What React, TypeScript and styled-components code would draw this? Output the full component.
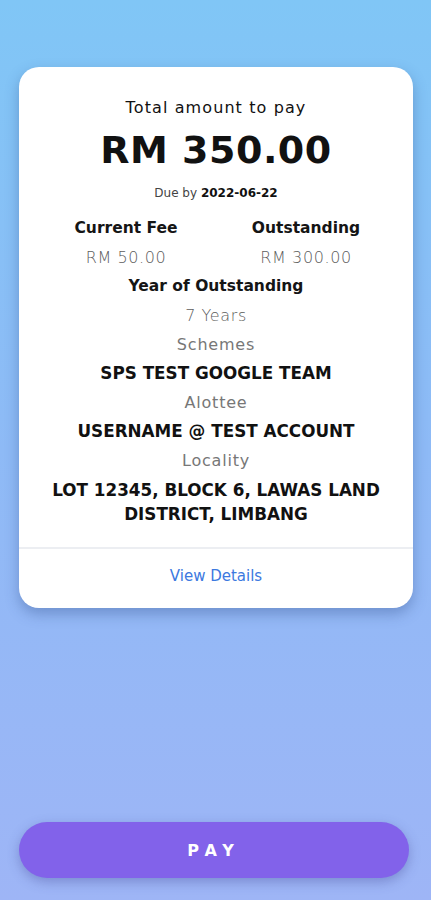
import React from 'react';
import styled, { createGlobalStyle } from 'styled-components';

const GlobalStyle = createGlobalStyle`
  * {
    box-sizing: border-box;
  }
  html, body {
    margin: 0;
    padding: 0;
  }
  body {
    font-family: 'DejaVu Sans', 'Open Sans', sans-serif;
    color: #111;
  }
`;

const Screen = styled.div`
  display: flex;
  flex-direction: column;
  justify-content: space-between;
  width: 100%;
  height: 900px;
  padding: 67px 19px 22px;
  background: linear-gradient(180deg, #80c6f6 0%, #8ebaf6 50%, #9eb5f6 100%);
`;

const Card = styled.div`
  display: flex;
  flex-direction: column;
  background-color: white;
  border-radius: 20px;
  box-shadow: 0 6px 14px rgba(40, 70, 130, 0.35);
  width: 394px;
`;

const Body = styled.div`
  display: flex;
  flex-direction: column;
  align-items: center;
  padding: 30px 12px 21px;
  text-align: center;
`;

const Label = styled.div`
  font-size: 16px;
  line-height: 22px;
  letter-spacing: 1.1px;
  color: #111;
`;

const Amount = styled.div`
  font-size: 38px;
  line-height: 46px;
  font-weight: 700;
  margin-top: 8px;
  letter-spacing: 0.5px;
  color: #111;
`;

const Due = styled.div`
  font-size: 12px;
  line-height: 16px;
  color: #444;
  margin-top: 12px;
  margin-bottom: 13px;
  b {
    color: #111;
    font-weight: 700;
  }
`;

const Columns = styled.div`
  display: grid;
  grid-template-columns: 1fr 1fr;
  width: 100%;
  padding: 0 5px;
`;

const Column = styled.div`
  display: flex;
  flex-direction: column;
  align-items: center;
`;

const FieldTitle = styled.div`
  font-size: 15.5px;
  font-weight: 700;
  color: #151515;
  line-height: 29px;
`;

const FieldValue = styled.div`
  font-size: 16px;
  font-weight: 300;
  color: #5c5c5c;
  line-height: 29px;
  letter-spacing: 0.6px;
`;

const SectionName = styled.div`
  font-size: 16px;
  color: #777;
  line-height: 29px;
  letter-spacing: 0.8px;
`;

const Strong = styled.div<{ $multiline?: boolean }>`
  font-size: 16.8px;
  font-weight: 700;
  color: #111;
  line-height: ${p => (p.$multiline ? '24px' : '29px')};
  margin-top: ${p => (p.$multiline ? '3px' : '0')};
`;

const Divider = styled.div`
  height: 2px;
  background-color: #eceef2;
`;

const ViewDetails = styled.a`
  display: block;
  text-align: center;
  color: #3c79e0;
  font-size: 15px;
  line-height: 20px;
  padding: 17px 0 22px;
  text-decoration: none;
`;

const PayButton = styled.button`
  width: 390px;
  height: 56px;
  border: none;
  border-radius: 28px;
  background-color: #8262ea;
  color: white;
  font-family: inherit;
  font-size: 16px;
  font-weight: 700;
  letter-spacing: 7px;
  box-shadow: 0 4px 12px rgba(60, 60, 140, 0.35);
`;

const App = () => {
  return (
    <>
      <GlobalStyle />
      <Screen>
        <Card>
          <Body>
            <Label>Total amount to pay</Label>
            <Amount>RM 350.00</Amount>
            <Due>
              Due by <b>2022-06-22</b>
            </Due>
            <Columns>
              <Column>
                <FieldTitle>Current Fee</FieldTitle>
                <FieldValue>RM 50.00</FieldValue>
              </Column>
              <Column>
                <FieldTitle>Outstanding</FieldTitle>
                <FieldValue>RM 300.00</FieldValue>
              </Column>
            </Columns>
            <FieldTitle>Year of Outstanding</FieldTitle>
            <FieldValue>7 Years</FieldValue>
            <SectionName>Schemes</SectionName>
            <Strong>SPS TEST GOOGLE TEAM</Strong>
            <SectionName>Alottee</SectionName>
            <Strong>USERNAME @ TEST ACCOUNT</Strong>
            <SectionName>Locality</SectionName>
            <Strong $multiline>
              LOT 12345, BLOCK 6, LAWAS LAND
              <br />
              DISTRICT, LIMBANG
            </Strong>
          </Body>
          <Divider />
          <ViewDetails>View Details</ViewDetails>
        </Card>
        <PayButton>PAY</PayButton>
      </Screen>
    </>
  );
};

export default App;
